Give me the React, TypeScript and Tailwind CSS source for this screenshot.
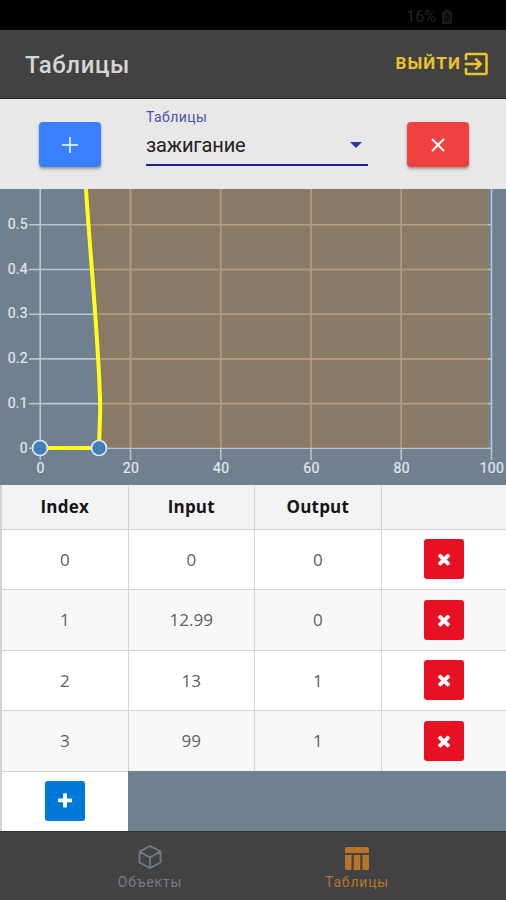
import { useState } from 'react';

interface Row {
  input: number;
  output: number;
}

const initialRows: Row[] = [
  { input: 0, output: 0 },
  { input: 12.99, output: 0 },
  { input: 13, output: 1 },
  { input: 99, output: 1 },
];

const X0 = 40.25;
const Y0 = 259;
const X_STEP = 90.25;
const Y_STEP = 44.7;

function TimesIcon() {
  return (
    <svg viewBox="0 0 1792 1792" className="size-[18px] fill-white">
      <path d="M1490 1322q0 40-28 68l-136 136q-28 28-68 28t-68-28l-294-294-294 294q-28 28-68 28t-68-28l-136-136q-28-28-28-68t28-68l294-294-294-294q-28-28-28-68t28-68l136-136q28-28 68-28t68 28l294 294 294-294q28-28 68-28t68 28l136 136q28 28 28 68t-28 68l-294 294 294 294q28 28 28 68z" />
    </svg>
  );
}

function PlusIcon() {
  return (
    <svg viewBox="0 0 1792 1792" className="size-[18px] fill-white">
      <path d="M1600 736v192q0 40-28 68t-68 28h-416v416q0 40-28 68t-68 28h-192q-40 0-68-28t-28-68v-416h-416q-40 0-68-28t-28-68v-192q0-40 28-68t68-28h416v-416q0-40 28-68t68-28h192q40 0 68 28t28 68v416h416q40 0 68 28t28 68z" />
    </svg>
  );
}

function StatusBar() {
  return (
    <div className="flex h-[30px] shrink-0 items-center justify-end gap-1.5 bg-black pr-[54px] pt-1 text-[16px] text-[#222]">
      <span>16%</span>
      <svg viewBox="0 0 10 14" className="h-[14px] w-[10px]">
        <path d="M3 1h4v1.500h2V13H1V2.500h2z" fill="#101010" stroke="#222" strokeWidth="1.500" />
      </svg>
    </div>
  );
}

function Header() {
  return (
    <header className="flex h-[69px] shrink-0 items-center justify-between border-b border-[#222] bg-[#424242] pl-[25px] pr-[17px]">
      <h1 className="pt-0.5 text-[24px] font-medium tracking-[0.6px] text-[#d6d6d6]">Таблицы</h1>
      <button className="flex items-center gap-[2px] text-[17px] font-bold tracking-[1.1px] text-[#e9c22c]">
        <span>ВЫЙТИ</span>
        <svg viewBox="0 0 26 26" className="size-[26px] fill-none stroke-current stroke-[2.6]">
          <path d="M3 9V4.300q0-1.300 1.300-1.300h17.900q1.300 0 1.300 1.300v17.400q0 1.300-1.300 1.300H4.300q-1.300 0-1.300-1.300V17" />
          <path d="M1.800 13H17M12.300 7.600l5.400 5.400-5.400 5.400" />
        </svg>
      </button>
    </header>
  );
}

function Toolbar() {
  return (
    <div className="flex h-[90px] shrink-0 items-start bg-[#e8e8e8] pl-[39px]">
      <button className="mt-[23px] flex h-[45px] w-[62px] items-center justify-center rounded bg-[#3880ff] shadow-[0_2px_3px_rgba(0,0,0,0.35)]">
        <svg viewBox="0 0 16 16" className="size-4 stroke-white stroke-[1.5]">
          <path d="M8 0v16M0 8h16" />
        </svg>
      </button>
      <div className="ml-[45px] mt-[9px] h-[58px] w-[222px] border-b-2 border-[#1a1f9c]">
        <div className="text-[14px] leading-[18px] tracking-[0.45px] text-[#4d55ae]">Таблицы</div>
        <div className="flex h-[37px] items-center justify-between pr-[6px] text-[20px] tracking-[-0.15px] text-[#222]">
          <span>зажигание</span>
          <svg viewBox="0 0 12 6" className="h-[6px] w-[12px] fill-[#2a36a8]">
            <path d="M0 0h12L6 6z" />
          </svg>
        </div>
      </div>
      <button className="ml-[39px] mt-[23px] flex h-[45px] w-[62px] items-center justify-center rounded bg-[#f04141] shadow-[0_2px_3px_rgba(0,0,0,0.35)]">
        <svg viewBox="0 0 14 14" className="size-[14px] stroke-white stroke-2">
          <path d="M1 1l12 12M13 1L1 13" />
        </svg>
      </button>
    </div>
  );
}

function Chart() {
  const ticks = [0, 1, 2, 3, 4, 5];
  return (
    <svg viewBox="0 0 506 296" className="h-[296px] w-[506px] shrink-0 bg-[#708090]">
      <g stroke="#b8c6cf" strokeWidth="1.6">
        {ticks.map((t) => (
          <line key={`x${t}`} x1={X0 + t * X_STEP} x2={X0 + t * X_STEP} y1="0" y2="271" />
        ))}
        {ticks.map((t) => (
          <line key={`y${t}`} x1="29" x2="491.5" y1={Y0 + 0.3 - t * Y_STEP} y2={Y0 + 0.3 - t * Y_STEP} />
        ))}
      </g>
      <path d="M86 0C90 66 102 190 100 228L99 259H488V0Z" fill="#a07242" fillOpacity="0.54" />
      {/* lighter grid over the filled area */}
      <g stroke="#b69c7e" strokeOpacity="0.75" strokeWidth="1.6">
        {ticks.slice(1, 5).map((t) => (
          <line key={t} x1={X0 + t * X_STEP} x2={X0 + t * X_STEP} y1="0" y2="259" />
        ))}
        {ticks.slice(1).map((t) => (
          <line key={t} x1="100" x2="488" y1={Y0 + 0.3 - t * Y_STEP} y2={Y0 + 0.3 - t * Y_STEP} />
        ))}
      </g>
      <path d="M40 259H99L100 228C102 190 90 66 86 0" fill="none" stroke="#ffff1a" strokeWidth="4" />
      <g fill="#3f80b8" stroke="#dbe7ee" strokeWidth="1.7">
        <circle cx="40" cy="259" r="7.5" />
        <circle cx="99" cy="259" r="7.5" />
      </g>
      <g fill="#e2e9ee" fontSize="14" letterSpacing="0.3" stroke="#e2e9ee" strokeWidth="0.2">
        {ticks.map((t) => (
          <text key={`xl${t}`} x={X0 + 0.4 + t * X_STEP} y="284" textAnchor="middle">
            {t * 20}
          </text>
        ))}
        {ticks.map((t) => (
          <text key={`yl${t}`} x="28" y={Y0 + 4.5 - t * Y_STEP} textAnchor="end">
            {t / 10}
          </text>
        ))}
      </g>
    </svg>
  );
}

function DataTable() {
  const [rows, setRows] = useState<Row[]>(initialRows);

  const removeRow = (index: number) => setRows(rows.filter((_, i) => i !== index));
  const addRow = () => setRows([...rows, { input: 0, output: 0 }]);

  const tdClass = 'border-l border-t border-[#d3d3d3] p-0 text-center';

  return (
    <table className="w-[507px] table-fixed border-separate border-spacing-0 border-l border-[#d3d3d3] font-['Open_Sans',sans-serif] text-[17px] text-[#606060]">
      <thead>
        <tr className="h-[43.5px] bg-[#f3f3f3] text-[#151515]">
          {['Index', 'Input', 'Output', ''].map((label) => (
            <th key={label} className="border-l border-[#d3d3d3] p-0 font-bold tracking-[0.2px]">
              {label}
            </th>
          ))}
        </tr>
      </thead>
      <tbody>
        {rows.map((row, index) => (
          <tr key={index} className="h-[60.5px] bg-white even:bg-[#f8f8f8]">
            <td className={tdClass}>{index}</td>
            <td className={tdClass}>{row.input}</td>
            <td className={tdClass}>{row.output}</td>
            <td className={tdClass}>
              <button
                onClick={() => removeRow(index)}
                className="mx-auto flex size-10 items-center justify-center rounded-[3px] bg-[#e81123]"
              >
                <TimesIcon />
              </button>
            </td>
          </tr>
        ))}
        <tr className="h-[60.5px]">
          <td className={`${tdClass} bg-white`}>
            <button
              onClick={addRow}
              className="mx-auto flex size-10 items-center justify-center rounded-[3px] bg-[#0078d7]"
            >
              <PlusIcon />
            </button>
          </td>
        </tr>
      </tbody>
    </table>
  );
}

function TabBar() {
  return (
    <nav className="flex h-[69px] shrink-0 justify-center gap-[111px] border-t border-[#303030] bg-[#424242] pl-px pt-[12px] text-[14px] leading-[18px] tracking-[0.8px]">
      <button className="flex w-24 flex-col items-center gap-[3px] text-[#737d87]">
        <svg viewBox="0 0 24 26" className="h-[26px] w-[24px] fill-none stroke-current stroke-[1.8] [stroke-linejoin:round]">
          <path d="M12 2l10.500 5.500v11L12 24 1.500 18.500v-11zM1.500 7.500L12 13.500l10.500-6M12 13.500V24" />
        </svg>
        <span>Объекты</span>
      </button>
      <button className="flex w-24 flex-col items-center gap-[3px] text-[#b8752a]">
        <svg viewBox="0 0 24 26" className="h-[26px] w-[24px] fill-current">
          <path d="M2 3h20q2 0 2 2v4H0V5q0-2 2-2zM0 11h6.500v15H2q-2 0-2-2zM8.800 11h6.500v15H8.800zM17.500 11H24v13q0 2-2 2h-4.500z" />
        </svg>
        <span>Таблицы</span>
      </button>
    </nav>
  );
}

export default function App() {
  return (
    <div className="flex h-[900px] w-[506px] flex-col overflow-hidden bg-[#708090] font-[Roboto,sans-serif]">
      <StatusBar />
      <Header />
      <Toolbar />
      <Chart />
      <main className="h-[346px] shrink-0 overflow-hidden">
        <DataTable />
      </main>
      <TabBar />
    </div>
  );
}
